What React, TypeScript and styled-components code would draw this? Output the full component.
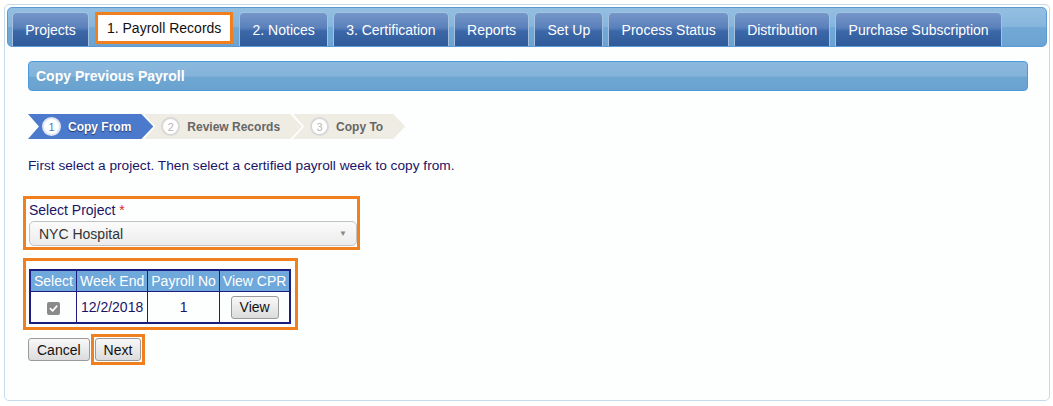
import React, { useState } from 'react';
import styled, { createGlobalStyle } from 'styled-components';

const TABS = [
  'Projects',
  '1. Payroll Records',
  '2. Notices',
  '3. Certification',
  'Reports',
  'Set Up',
  'Process Status',
  'Distribution',
  'Purchase Subscription',
];

const STEPS = ['Copy From', 'Review Records', 'Copy To'];

const GlobalStyle = createGlobalStyle`
  body {
    margin: 0;
    background: #ffffff;
    font-family: "Liberation Sans", Arial, sans-serif;
  }
`;

const App: React.FC = () => {
  const [tab, setTab] = useState(1);
  const [project, setProject] = useState('NYC Hospital');

  return (
    <>
      <GlobalStyle />
      <Panel>
        <TabBar>
          {TABS.map((t, i) => (
            <Tab key={t} active={i === tab} onClick={() => setTab(i)}>
              {t}
            </Tab>
          ))}
        </TabBar>

        <Content>
          <TitleBar>Copy Previous Payroll</TitleBar>

          <Steps>
            {STEPS.map((s, i) => (
              <Step key={s} current={i === 0} first={i === 0}>
                <StepNum current={i === 0}>{i + 1}</StepNum>
                {s}
              </Step>
            ))}
          </Steps>

          <Intro>First select a project. Then select a certified payroll week to copy from.</Intro>

          {/* highlighted project picker */}
          <Highlight>
            <Label>
              Select Project <Required>*</Required>
            </Label>
            <SelectBox>
              <select value={project} onChange={e => setProject(e.target.value)}>
                <option>NYC Hospital</option>
              </select>
              <Caret>▼</Caret>
            </SelectBox>
          </Highlight>

          <TableWrap>
            <Grid>
              <thead>
                <tr>
                  <Th>Select</Th>
                  <Th>Week End</Th>
                  <Th>Payroll No</Th>
                  <Th>View CPR</Th>
                </tr>
              </thead>
              <tbody>
                <tr>
                  <Td>
                    <CheckMark>
                      <svg width="9" height="9" viewBox="0 0 10 10">
                        <path d="M1.5 5.2 L4 7.6 L8.6 2.4" fill="none" stroke="#fff" strokeWidth="1.8" strokeLinecap="round" strokeLinejoin="round" />
                      </svg>
                    </CheckMark>
                  </Td>
                  <Td>12/2/2018</Td>
                  <Td>1</Td>
                  <Td><Button>View</Button></Td>
                </tr>
              </tbody>
            </Grid>
          </TableWrap>

          <Actions>
            <Button>Cancel</Button>
            <NextRing>
              <Button>Next</Button>
            </NextRing>
          </Actions>
        </Content>
      </Panel>
    </>
  );
};

export default App;

const Panel = styled.div`
  box-sizing: border-box;
  margin: 4px 3px 0 4px;
  height: 397px;
  border: 1px solid #c5dbec;
  border-radius: 5px;
  padding: 2px 2px;
  background: #fdfefe;
`;

const TabBar = styled.nav`
  box-sizing: border-box;
  height: 40px;
  display: flex;
  align-items: flex-end;
  gap: 5px;
  padding: 0 4px;
  border: 1px solid #5c9ad6;
  border-radius: 5px;
  background: linear-gradient(#93bfe2 0%, #86b5dc 50%, #72a9d6 51%, #6aa3d2 100%);
`;

const Tab = styled.div<{ active?: boolean }>`
  box-sizing: border-box;
  height: ${p => (p.active ? '32px' : '34px')};
  display: flex;
  align-items: center;
  padding: 0 ${p => (p.active ? '9px' : '12.2px')};
  font-size: 14px;
  cursor: pointer;
  border-radius: 5px 5px 0 0;
  ${p =>
    p.active
      ? `
    color: #111;
    background: #fff;
    border: 3px solid #f0801f;
    border-radius: 0;
    margin: 0 1px 2px;
  `
      : `
    color: #fff;
    border: 1px solid #a6c1df;
    border-bottom: none;
    background: linear-gradient(#7596c8 0%, #5a80bb 45%, #3c67a8 55%, #2f5b9a 100%);
  `}
`;

const Content = styled.div`
  padding: 14px 19px 0 21px;
`;

const TitleBar = styled.div`
  box-sizing: border-box;
  height: 30px;
  display: flex;
  align-items: center;
  padding-left: 7px;
  color: #fff;
  font-size: 14px;
  font-weight: bold;
  border: 1px solid #4d9ad8;
  border-radius: 4px;
  background: linear-gradient(#8ab8dd 0%, #84b3da 50%, #6ea6d2 55%, #6aa3d0 100%);
`;

const Steps = styled.div`
  display: flex;
  margin-top: 23px;
`;

const Step = styled.div<{ current?: boolean; first?: boolean }>`
  height: 25px;
  display: flex;
  align-items: center;
  gap: 7px;
  padding: 0 22px 0 ${p => (p.first ? '14px' : '17px')};
  margin-left: ${p => (p.first ? '0' : '-9px')};
  font-size: 12px;
  font-weight: bold;
  color: ${p => (p.current ? '#fff' : '#666')};
  text-shadow: ${p => (p.current ? '0 1px 1px #223366' : 'none')};
  background: ${p => (p.current ? '#4b79cb' : '#efece3')};
  clip-path: polygon(0 0, calc(100% - 12px) 0, 100% 50%, calc(100% - 12px) 100%, 0 100%, 11px 50%);
`;

const StepNum = styled.span<{ current?: boolean }>`
  box-sizing: border-box;
  width: 19px;
  height: 19px;
  border-radius: 50%;
  display: flex;
  align-items: center;
  justify-content: center;
  font-size: 11px;
  font-weight: normal;
  text-shadow: none;
  background: #fff;
  border: 2px solid ${p => (p.current ? '#dfe6f4' : '#d8d8d8')};
  color: ${p => (p.current ? '#4b79cb' : '#b5b5b5')};
`;

const Intro = styled.p`
  margin: 19px 0 0 0;
  font-size: 13.7px;
  color: #1b1466;
`;

const Highlight = styled.div`
  box-sizing: border-box;
  width: 337px;
  margin: 23px 0 0 -5px;
  padding: 2px 0 1px 3px;
  border: 3px solid #f0801f;
`;

const Label = styled.div`
  font-size: 14px;
  color: #1b1466;
  line-height: 18px;
`;

const Required = styled.span`
  color: #e02424;
`;

const SelectBox = styled.div`
  position: relative;
  margin-top: 2px;

  select {
    box-sizing: border-box;
    width: 100%;
    height: 25px;
    appearance: none;
    padding: 0 9px;
    font-family: "Liberation Sans", Arial, sans-serif;
    font-size: 14px;
    color: #333;
    border: 1px solid #c2c2c2;
    border-radius: 5px;
    background: linear-gradient(#fbfbfb, #ececec);
    outline: none;
  }
`;

const Caret = styled.span`
  position: absolute;
  right: 10px;
  top: 8px;
  font-size: 8px;
  color: #888;
  pointer-events: none;
`;

const TableWrap = styled.div`
  width: fit-content;
  margin: 8px 0 0 -5px;
  padding: 8px 4px 3px 3px;
  border: 3px solid #f0801f;
`;

const Grid = styled.table`
  border-collapse: collapse;
  border: 2px solid #1c1c7e;
  font-size: 14px;
`;

const Th = styled.th`
  height: 20px;
  padding: 0 3px;
  font-weight: normal;
  color: #fff;
  background: #6fa8da;
  border: 1px solid #1c1c7e;
  white-space: nowrap;
`;

const Td = styled.td`
  height: 30px;
  padding: 0 3px;
  text-align: center;
  color: #1b1466;
  border: 1px solid #1c1c7e;
`;

const CheckMark = styled.span`
  display: inline-flex;
  align-items: center;
  justify-content: center;
  width: 13px;
  height: 13px;
  border-radius: 2px;
  background: #8a8a8a;
  vertical-align: middle;
`;

const Button = styled.button`
  height: 23px;
  padding: 0 8px;
  font-family: "Liberation Sans", Arial, sans-serif;
  font-size: 14px;
  color: #111;
  border: 1px solid #9a9a9a;
  border-radius: 3px;
  background: linear-gradient(#f8f8f8, #dcdcdc);
  cursor: pointer;
`;

const Actions = styled.div`
  display: flex;
  align-items: center;
  gap: 1px;
  margin-top: 4px;
`;

const NextRing = styled.span`
  display: inline-flex;
  padding: 1px 1px 1px 1px;
  border: 3px solid #f0801f;
`;
